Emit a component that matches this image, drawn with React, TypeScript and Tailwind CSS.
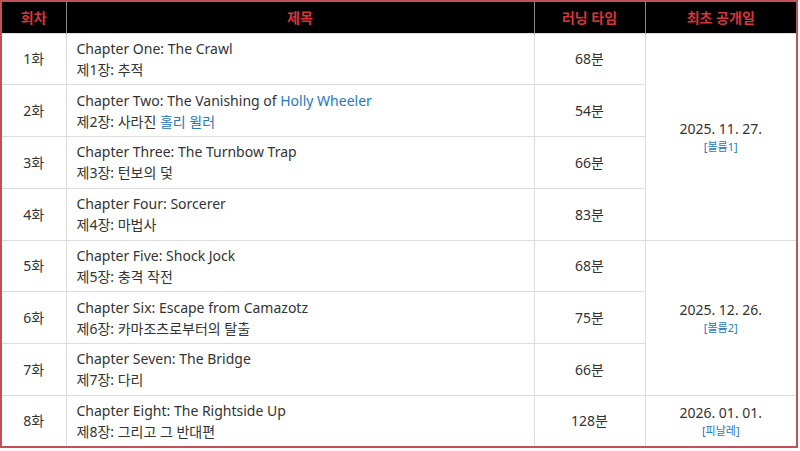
import React from 'react';

type Row = {
  no: string;
  en: React.ReactNode;
  ko: React.ReactNode;
  time: string;
};

const link = 'text-[#2478c0]';

const rows: Row[] = [
  { no: '1화', en: 'Chapter One: The Crawl', ko: '제1장: 추적', time: '68분' },
  {
    no: '2화',
    en: (
      <>
        Chapter Two: The Vanishing of <span className={link}>Holly Wheeler</span>
      </>
    ),
    ko: (
      <>
        제2장: 사라진 <span className={link}>홀리 윌러</span>
      </>
    ),
    time: '54분',
  },
  { no: '3화', en: 'Chapter Three: The Turnbow Trap', ko: '제3장: 턴보의 덫', time: '66분' },
  { no: '4화', en: 'Chapter Four: Sorcerer', ko: '제4장: 마법사', time: '83분' },
  { no: '5화', en: 'Chapter Five: Shock Jock', ko: '제5장: 충격 작전', time: '68분' },
  { no: '6화', en: 'Chapter Six: Escape from Camazotz', ko: '제6장: 카마조츠로부터의 탈출', time: '75분' },
  { no: '7화', en: 'Chapter Seven: The Bridge', ko: '제7장: 다리', time: '66분' },
  { no: '8화', en: 'Chapter Eight: The Rightside Up', ko: '제8장: 그리고 그 반대편', time: '128분' },
];

// release date cells span several rows
const releases: Record<number, { date: string; tag: string; span: number }> = {
  0: { date: '2025. 11. 27.', tag: '[볼륨1]', span: 4 },
  4: { date: '2025. 12. 26.', tag: '[볼륨2]', span: 3 },
  7: { date: '2026. 01. 01.', tag: '[피날레]', span: 1 },
};

export default function App() {
  return (
    <div
      className="w-[800px] h-[451px] bg-white text-[#333] text-[14px]"
      style={{ fontFamily: '"Noto Sans", "Noto Sans CJK KR", sans-serif' }}
    >
      <table className="w-[798px] table-fixed border-collapse border-2 border-[#c2505a]">
        <colgroup>
          <col className="w-[65px]" />
          <col className="w-[468px]" />
          <col className="w-[111px]" />
          <col />
        </colgroup>
        <thead>
          <tr className="h-[32px] bg-black text-[#d8343c] font-bold">
            <th className="border-r border-[#888]">회차</th>
            <th className="border-r border-[#888]">제목</th>
            <th className="border-r border-[#888]">러닝 타임</th>
            <th>최초 공개일</th>
          </tr>
        </thead>
        <tbody>
          {rows.map((r, i) => {
            const rel = releases[i];
            return (
              <tr key={r.no} className="h-[51.75px]">
                <td className="border border-[#ddd] border-l-0 text-center">{r.no}</td>
                <td className="border border-[#ddd] pl-[10px] leading-[21px]">
                  <div>{r.en}</div>
                  <div>{r.ko}</div>
                </td>
                <td className="border border-[#ddd] text-center">{r.time}</td>
                {rel && (
                  <td rowSpan={rel.span} className="border border-[#ddd] border-r-0 text-center">
                    <div className="leading-[20px]">{rel.date}</div>
                    <div className={`text-[11px] leading-[16px] ${link}`}>{rel.tag}</div>
                  </td>
                )}
              </tr>
            );
          })}
        </tbody>
      </table>
    </div>
  );
}
